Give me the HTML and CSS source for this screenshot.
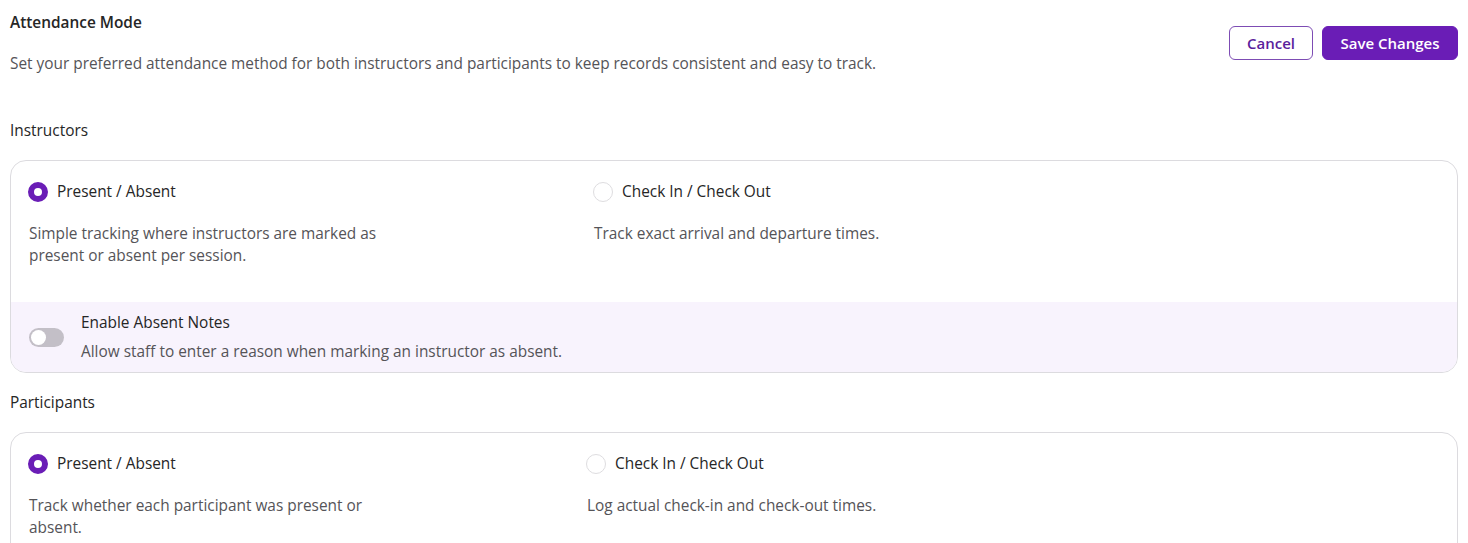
FILE: index.html
```html
<!DOCTYPE html>
<html lang="en">
<head>
<meta charset="utf-8">
<title>Attendance Mode</title>
<link rel="stylesheet" href="styles.css">
</head>
<body>
<div class="page">
  <header class="header">
    <div class="header-text">
      <h1 class="title">Attendance Mode</h1>
      <p class="subtitle">Set your preferred attendance method for both instructors and participants to keep records consistent and easy to track.</p>
    </div>
    <div class="actions">
      <button class="btn btn-outline">Cancel</button>
      <button class="btn btn-primary">Save Changes</button>
    </div>
  </header>

  <section class="group">
    <h2 class="group-label">Instructors</h2>
    <div class="card">
      <div class="options">
        <div class="option option-first">
          <div class="option-head"><span class="radio radio-on"></span><span class="option-name">Present / Absent</span></div>
          <p class="option-desc">Simple tracking where instructors are marked as present or absent per session.</p>
        </div>
        <div class="option">
          <div class="option-head"><span class="radio"></span><span class="option-name">Check In / Check Out</span></div>
          <p class="option-desc">Track exact arrival and departure times.</p>
        </div>
      </div>
      <div class="notes">
        <span class="toggle"><span class="knob"></span></span>
        <div class="notes-text">
          <div class="notes-title">Enable Absent Notes</div>
          <div class="notes-desc">Allow staff to enter a reason when marking an instructor as absent.</div>
        </div>
      </div>
    </div>
  </section>

  <section class="group">
    <h2 class="group-label">Participants</h2>
    <div class="card">
      <div class="options">
        <div class="option option-first option-narrow">
          <div class="option-head"><span class="radio radio-on"></span><span class="option-name">Present / Absent</span></div>
          <p class="option-desc">Track whether each participant was present or absent.</p>
        </div>
        <div class="option">
          <div class="option-head"><span class="radio"></span><span class="option-name">Check In / Check Out</span></div>
          <p class="option-desc">Log actual check-in and check-out times.</p>
        </div>
      </div>
    </div>
  </section>
</div>
</body>
</html>
```

FILE: styles.css
```css
* { box-sizing: border-box; }
html, body { margin: 0; padding: 0; background: #ffffff; }
body {
  font-family: "Open Sans", "Noto Sans", "Liberation Sans", sans-serif;
  font-size: 15.4px;
  color: #2b2b2b;
}
.page { padding: 12px 10px 0 10px; }

.header { display: flex; justify-content: space-between; align-items: flex-start; }
.title { margin: 0; font-size: 15.4px; font-weight: 600; line-height: 22px; color: #262626; }
.subtitle { margin: 19px 0 0 0; line-height: 22px; color: #555458; }

.actions { display: flex; gap: 9px; margin-top: 14px; }
.btn {
  font-family: inherit;
  font-size: 15px;
  font-weight: 600;
  height: 34px;
  border-radius: 6px;
  padding: 0;
  cursor: pointer;
}
.btn-outline { background: #fff; border: 1px solid #7d4cb4; color: #5a1e9c; width: 84px; }
.btn-primary { background: #6a1db6; border: 1px solid #6a1db6; color: #fff; width: 136px; }

.group { margin-top: 45px; }
.group + .group { margin-top: 19px; }
.group-label { margin: 0; font-size: 15.4px; font-weight: 400; line-height: 22px; color: #262626; }

.card {
  margin-top: 18px;
  border: 1px solid #dcdbdf;
  border-radius: 16px;
  overflow: hidden;
}
.options { display: flex; padding: 20px 18px 35px 18px; }
.option-first { width: 565px; flex: none; }
.option-narrow { width: 558px; }
.option-head { display: flex; align-items: center; gap: 9px; height: 22px; margin-left: -1px; }
.option-name { line-height: 22px; color: #262626; }
.option-desc { margin: 20px 0 0 0; line-height: 22px; color: #555458; max-width: 362px; }

.radio {
  width: 20px; height: 20px; border-radius: 50%;
  border: 1.5px solid #dedde0;
  background: #fff;
  flex: none;
  margin-top: -1px;
}
.radio-on { border: 6px solid #6a1db6; }

.notes {
  display: flex; align-items: center; gap: 17px;
  background: #f8f3fd;
  padding: 10px 18px 9px 18px;
}
.toggle {
  width: 35px; height: 19px; border-radius: 10px;
  background: #c3bfc7;
  display: flex; align-items: center; padding: 0 2px;
  flex: none;
}
.knob { width: 15px; height: 15px; border-radius: 50%; background: #fff; }
.notes-title { line-height: 22px; color: #262626; }
.notes-desc { margin-top: 7px; line-height: 22px; color: #555458; }
```
